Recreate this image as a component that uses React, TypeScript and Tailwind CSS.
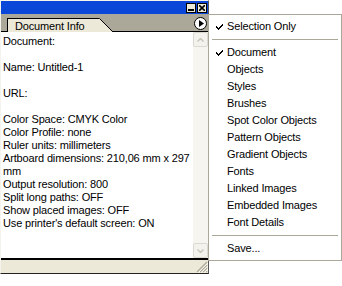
import React from 'react';

const lines = [
  'Document:',
  '',
  'Name: Untitled-1',
  '',
  'URL:',
  '',
  'Color Space: CMYK Color',
  'Color Profile: none',
  'Ruler units: millimeters',
  'Artboard dimensions: 210,06 mm x 297',
  'mm',
  'Output resolution: 800',
  'Split long paths: OFF',
  'Show placed images: OFF',
  "Use printer's default screen: ON",
];

const menuItems: { label: string; checked?: boolean; sep?: boolean }[] = [
  { label: 'Selection Only', checked: true },
  { label: '', sep: true },
  { label: 'Document', checked: true },
  { label: 'Objects' },
  { label: 'Styles' },
  { label: 'Brushes' },
  { label: 'Spot Color Objects' },
  { label: 'Pattern Objects' },
  { label: 'Gradient Objects' },
  { label: 'Fonts' },
  { label: 'Linked Images' },
  { label: 'Embedded Images' },
  { label: 'Font Details' },
  { label: '', sep: true },
  { label: 'Save...' },
];

const Check = () => (
  <svg width="7" height="7" viewBox="0 0 7 7" className="block">
    <path d="M0 3h1v1h1v1h1V4h1V3h1V2h1V1h1v2h-1v1h-1v1h-1v1h-1v1H2V6H1V5H0z" fill="#000" />
  </svg>
);

export default function App() {
  return (
    <div className="relative w-[342px] h-[286px] bg-white text-[11px] tracking-[-0.15px] text-black" style={{ fontFamily: '"Liberation Sans", Arial, sans-serif' }}>
      {/* Palette window */}
      <div className="w-[209px] h-[274px] flex flex-col bg-[#ece9d8] border-l border-t border-l-[#f4f3ee] border-t-[#f4f3ee] border-r border-b border-r-[#555] border-b-[#222]">
        {/* title bar */}
        <div className="h-[13px] bg-[#0a46d8] flex items-center justify-end gap-[1px] pr-[1px]">
          <div className="w-[10px] h-[10px] bg-[#ece9d8] border border-[#000] flex items-end justify-center pb-[1px]">
            <div className="w-[6px] h-[2px] bg-black" />
          </div>
          <div className="w-[10px] h-[10px] bg-[#ece9d8] border border-[#000] flex items-center justify-center">
            <svg width="6" height="6" viewBox="0 0 6 6" className="block">
              <path d="M0 0L6 6M6 0L0 6" stroke="#000" strokeWidth="1.6" />
            </svg>
          </div>
        </div>
        {/* tab row */}
        <div className="h-[18px] bg-[#aca899] flex items-end pl-[6px] relative border-b border-b-[#000]">
          <div className="relative h-[14px] flex items-end -mb-[1px]">
            <div className="h-[14px] bg-[#ece9d8] border-l border-t border-l-black border-t-black pl-[7px] pr-[14px] leading-[13px] pt-[1px]">
              Document Info
            </div>
            <svg width="14" height="14" viewBox="0 0 14 14" className="block">
              <path d="M0 0.5H0.5L13 13V14H0Z" fill="#ece9d8" />
              <path d="M0 0.5H0.5L13.5 13.5" stroke="#000" strokeWidth="1" fill="none" />
            </svg>
          </div>
          <div className="absolute right-[1px] top-[3px] w-[13px] h-[13px] rounded-full bg-white border border-black flex items-center justify-center">
            <svg width="5" height="7" viewBox="0 0 5 7" className="block ml-[1px]">
              <path d="M0 0L5 3.5L0 7Z" fill="#000" />
            </svg>
          </div>
        </div>
        {/* content */}
        <div className="flex-1 flex min-h-0">
          <div className="flex-1 bg-white pl-[2px] pt-[3px] overflow-hidden">
            {lines.map((l, i) => (
              <div key={i} className="h-[13px] leading-[13px] whitespace-nowrap">{l}</div>
            ))}
          </div>
          <div className="w-[15px] bg-[#f6f5ef] flex flex-col justify-between">
            <div className="h-[15px] bg-[#f3f2ec] border border-[#dcdad0] rounded-[2px] flex items-center justify-center">
              <svg width="7" height="4" viewBox="0 0 7 4" className="block">
                <path d="M0.5 3.5L3.5 0.5L6.5 3.5" stroke="#c9c7ba" strokeWidth="1.5" fill="none" />
              </svg>
            </div>
            <div className="h-[15px] bg-[#f3f2ec] border border-[#dcdad0] rounded-[2px] flex items-center justify-center">
              <svg width="7" height="4" viewBox="0 0 7 4" className="block">
                <path d="M0.5 0.5L3.5 3.5L6.5 0.5" stroke="#c9c7ba" strokeWidth="1.5" fill="none" />
              </svg>
            </div>
          </div>
        </div>
        {/* status bar */}
        <div className="h-[15px] border-t-2 border-t-black bg-[#ece9d8] flex justify-end items-end">
          <svg width="12" height="12" viewBox="0 0 12 12" className="block">
            <path d="M11 1L1 11M11 4L4 11M11 7L7 11M11 10L10 11" stroke="#aca899" strokeWidth="1.2" fill="none" />
            <path d="M12 2L2 12M12 5L5 12M12 8L8 12" stroke="#fff" strokeWidth="0.8" fill="none" />
          </svg>
        </div>
      </div>

      {/* Popup menu */}
      <div className="absolute left-[208px] top-[14px] w-[134px] bg-white border border-[#aca899] py-[3px]">
        {menuItems.map((m, i) =>
          m.sep ? (
            <div key={i} className="h-[9px] flex items-center px-[3px]">
              <div className="w-full h-[1px] bg-[#aca899]" />
            </div>
          ) : (
            <div key={i} className="h-[17px] flex items-center">
              <div className="w-[18px] flex justify-center pl-[2px]">{m.checked && <Check />}</div>
              <span className="leading-[17px]">{m.label}</span>
            </div>
          )
        )}
      </div>
    </div>
  );
}
